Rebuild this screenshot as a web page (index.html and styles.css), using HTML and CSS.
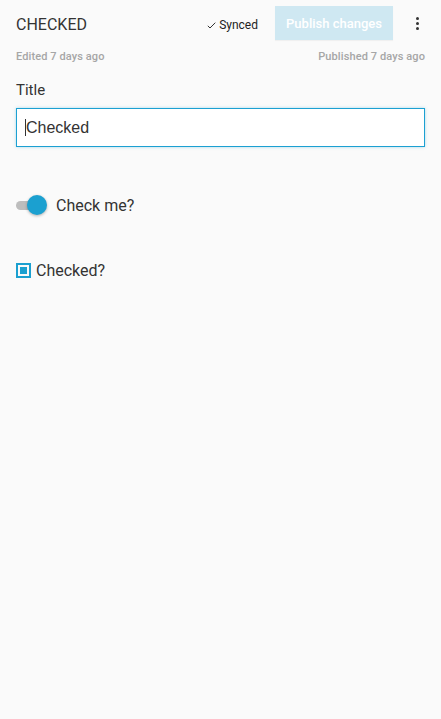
FILE: index.html
```html
<!DOCTYPE html>
<html>
<head>
<meta charset="utf-8">
<link rel="stylesheet" href="styles.css">
</head>
<body>
<div class="page">
  <header class="topbar">
    <h1 class="doc-title">CHECKED</h1>
    <div class="actions">
      <span class="synced"><svg class="check" width="9" height="7" viewBox="0 0 9 7"><path d="M0.8 3.8 L3 6 L8.3 0.7" fill="none" stroke="#333" stroke-width="1"/></svg>Synced</span>
      <button class="publish">Publish changes</button>
      <span class="kebab"><i></i><i></i><i></i></span>
    </div>
  </header>
  <div class="meta">
    <span>Edited 7 days ago</span>
    <span>Published 7 days ago</span>
  </div>
  <div class="field">
    <label class="label">Title</label>
    <div class="input"><span class="caret"></span>Checked</div>
  </div>
  <div class="toggle-row">
    <span class="toggle"><span class="track"></span><span class="knob"></span></span>
    <span class="toggle-label">Check me?</span>
  </div>
  <div class="checkbox-row">
    <span class="checkbox"><span class="fill"></span></span>
    <span class="checkbox-label">Checked?</span>
  </div>
</div>
</body>
</html>
```
FILE: styles.css
```css
html, body {
  margin: 0;
  padding: 0;
  background: #fafafa;
  height: 100%;
}
body {
  font-family: Roboto, "Noto Sans", sans-serif;
  color: #333;
}
.page {
  padding: 0 16px;
}
.topbar {
  display: flex;
  align-items: center;
  justify-content: space-between;
  height: 46px;
}
.doc-title {
  margin: 0;
  font-size: 16px;
  font-weight: 400;
  color: #333;
  letter-spacing: 0;
  position: relative;
  top: 1px;
}
.actions {
  display: flex;
  align-items: center;
  margin-right: 3px;
}
.synced {
  font-size: 12px;
  color: #222;
  display: flex;
  align-items: center;
  gap: 3px;
  margin-right: 17px;
  padding-top: 3px;
}
.check {
  margin-top: 2px;
}
.publish {
  border: 0;
  background: #cfe8f2;
  color: #fff;
  font-family: Roboto, sans-serif;
  font-weight: 500;
  font-size: 13px;
  height: 34px;
  width: 118px;
  padding: 0;
  margin-right: 19px;
  box-shadow: 0 1px 1px rgba(0,0,0,0.04);
}
.kebab {
  display: flex;
  flex-direction: column;
  gap: 2px;
  width: 10px;
  align-items: center;
}
.kebab i {
  display: block;
  width: 3px;
  height: 3px;
  border-radius: 50%;
  background: #333;
}
.meta {
  display: flex;
  justify-content: space-between;
  font-size: 11px;
  font-weight: 500;
  color: #a6a6a6;
  margin-top: 4px;
  height: 16px;
  letter-spacing: 0.1px;
}
.field {
  margin-top: 15px;
}
.label {
  display: block;
  font-size: 15px;
  color: #333;
  height: 18px;
  line-height: 18px;
}
.input {
  margin-top: 9px;
  height: 37px;
  border: 1px solid #1ca0d2;
  background: #fff;
  box-shadow: 0 0 3px rgba(28,160,210,0.35);
  font-family: "Liberation Sans", Arial, sans-serif;
  font-size: 16px;
  color: #333;
  display: flex;
  align-items: center;
  padding-left: 8px;
  position: relative;
}
.caret {
  display: inline-block;
  width: 1px;
  height: 17px;
  background: #333;
  margin-right: 0;
}
.toggle-row {
  display: flex;
  align-items: center;
  margin-top: 46px;
  height: 24px;
}
.toggle {
  position: relative;
  width: 32px;
  height: 20px;
  margin-right: 8px;
}
.track {
  position: absolute;
  left: 0;
  top: 6px;
  width: 26px;
  height: 9px;
  border-radius: 5px;
  background: #bdbdbd;
}
.knob {
  position: absolute;
  left: 11px;
  top: 0;
  width: 20px;
  height: 20px;
  border-radius: 50%;
  background: #1ba0d0;
  box-shadow: 0 1px 3px rgba(0,0,0,0.3);
}
.toggle-label {
  font-size: 16px;
  color: #333;
}
.checkbox-row {
  display: flex;
  align-items: center;
  margin-top: 44px;
  height: 18px;
}
.checkbox {
  box-sizing: border-box;
  width: 15px;
  height: 15px;
  border: 2px solid #1ba0d0;
  padding: 2px;
  margin-right: 5px;
  display: flex;
}
.fill {
  flex: 1;
  background: #1ba0d0;
}
.checkbox-label {
  font-size: 16px;
  color: #333;
}
```
